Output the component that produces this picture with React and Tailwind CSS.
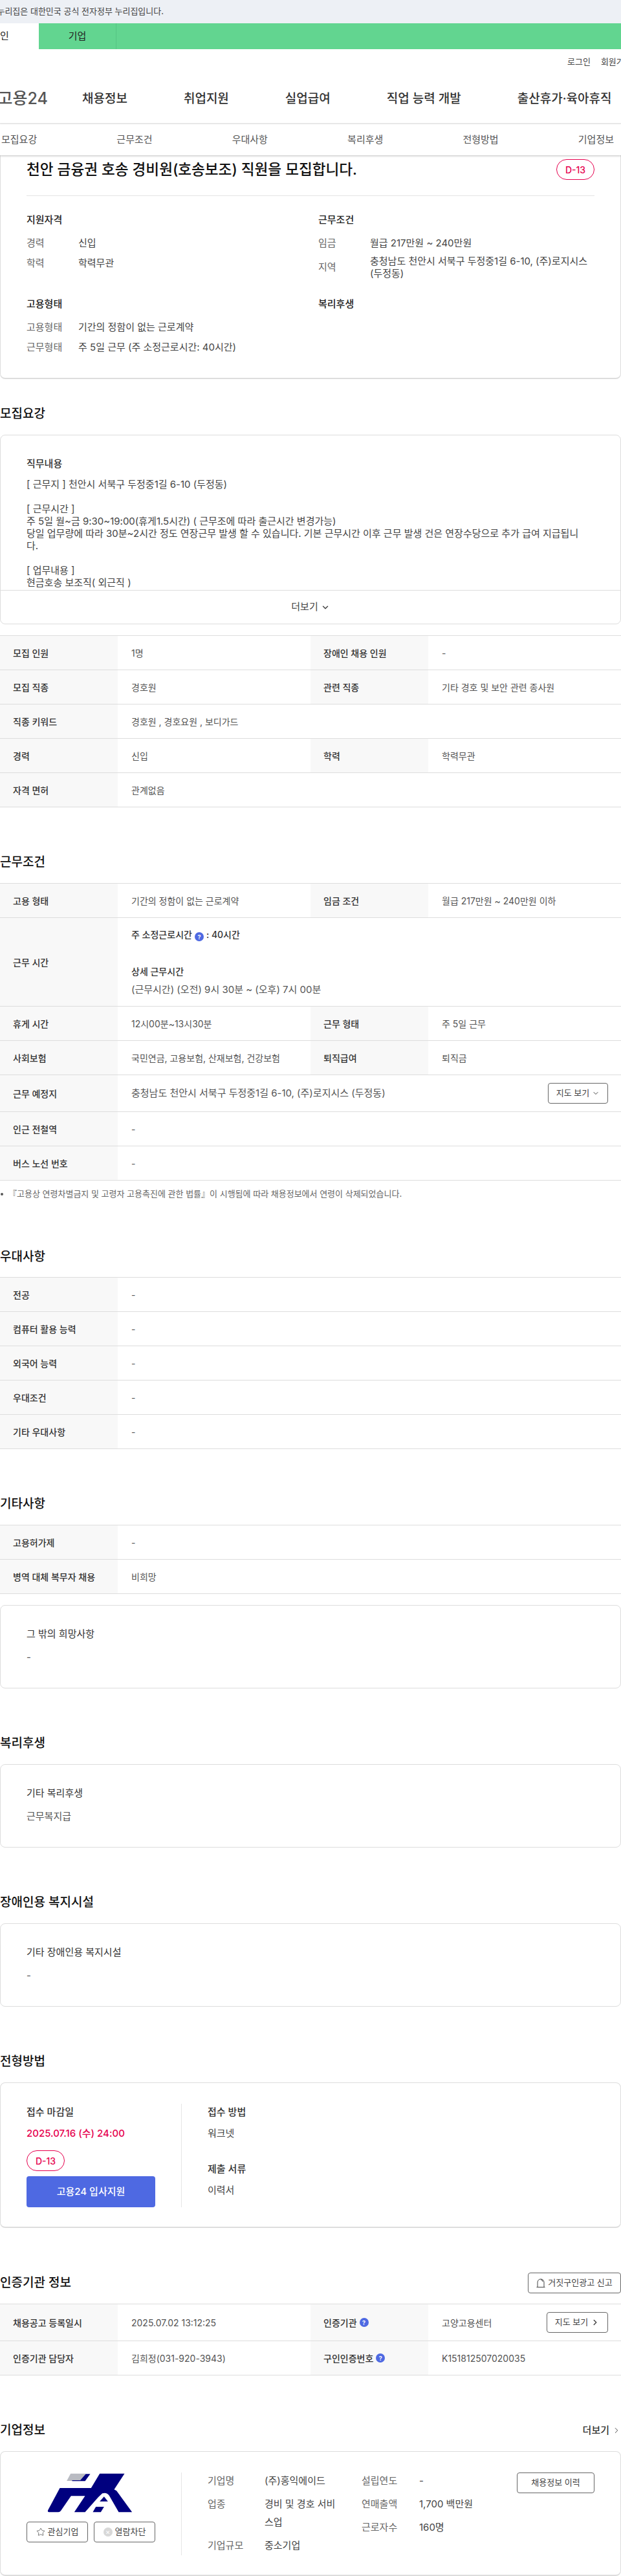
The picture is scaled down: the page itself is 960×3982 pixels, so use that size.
import React from "react";
import { ChevronDown, ChevronRight, Star } from "lucide-react";

const SectionTitle = ({ children, right }) => {
  return (
    <div className="mt-[71px] mb-[18px] flex h-7 items-center justify-between">
      <h2 className="text-[19px] leading-7 font-medium text-[#111]">{children}</h2>
      {right}
    </div>
  );
};

const Help = () => (
  <span className="mx-[4px] inline-flex h-[14px] w-[14px] items-center justify-center rounded-full bg-[#4e69e2] align-[-2px] text-[9px] leading-none font-bold text-white">
    ?
  </span>
);

// row of a table: th/td pairs, rows are 53px by default
const Row = ({ cells, h = "h-[53px]" }) => {
  return (
    <div className={`flex border-b border-[#dddddd] ${h}`}>
      {cells.map((c, i) => (
        <React.Fragment key={i}>
          <div className="flex w-[182px] shrink-0 items-center bg-[#f8f8f8] pl-5 text-[14px] font-medium text-[#333]">
            {c.th}
          </div>
          <div
            className={`flex items-center pl-[21px] text-[14px] text-[#555] ${
              cells.length === 1 ? "flex-1" : "w-[298px]"
            }`}
          >
            {c.td}
          </div>
        </React.Fragment>
      ))}
    </div>
  );
};

const Table = ({ children }) => <div className="border-t border-[#dddddd]">{children}</div>;

const Box = ({ title, children, h = "h-[129px]" }) => {
  return (
    <div className={`rounded-lg border border-[#dddddd] pt-8 pl-10 ${h}`}>
      <h3 className="h-6 text-[15px] leading-6 text-[#333]">{title}</h3>
      <p className="mt-3 h-6 text-[15px] leading-6 text-[#555]">{children}</p>
    </div>
  );
};

const Badge = () => (
  <span className="flex h-8 w-[59px] items-center justify-center rounded-full border border-[#e6004e] text-[14px] font-medium text-[#e6004e]">
    D-13
  </span>
);

const Info = ({ label, children, multi }) => (
  <div className={`flex text-[15px] ${multi ? "mt-px h-10 items-center" : "h-[31px] items-center"}`}>
    <span className="w-20 shrink-0 text-[#666]">{label}</span>
    <span className={`text-[#444] ${multi ? "leading-[19px]" : ""}`}>{children}</span>
  </div>
);

const Company = ({ label, value, vw = "w-[115px]", lw = "w-[88px]" }) => (
  <div className="flex text-[15px] leading-7">
    <span className={`${lw} shrink-0 text-[#666]`}>{label}</span>
    <span className={`${vw} text-[#444]`}>{value}</span>
  </div>
);

const Logo = () => (
  <svg width="132" height="61" viewBox="97 66 395 183">
    <path d="M205 68H275L250 102H187Z" fill="#b9bbc2" />
    <path d="M275 70H296L272 103H212V99H250Z" fill="#00007f" />
    <path
      d="M340 68H455L407 142L418 148L490 247H428L384 170Q372 153 352 160L333 178L272 247H222L272 172H207L160 240Q155 247 148 247H105Q97 247 100 238L155 135H300Z"
      fill="#00007f"
    />
    <path d="M360 175L378 197H340Z" fill="#00007f" />
    <path d="M322 222H360L345 247H308Z" fill="#00007f" />
  </svg>
);

export default function App() {
  return (
    <div className="w-[960px] overflow-hidden bg-white font-['Inter','Noto_Sans_CJK_KR',sans-serif] text-[#333]">
      {/* gov banner */}
      <div className="flex h-9 items-center bg-[#edf0f5]">
        <div className="flex w-[253px] justify-end overflow-hidden text-[13px] whitespace-nowrap text-[#444]">
          이 누리집은 대한민국 공식 전자정부 누리집입니다.
        </div>
      </div>

      <div className="flex h-10 bg-[#62d590] text-[15px]">
        <div className="flex w-[60px] items-center overflow-hidden bg-white text-[#222]">
          <span className="whitespace-nowrap">인</span>
        </div>
        <div className="flex w-[120px] items-center justify-center border-r border-[#56c484] text-[#222]">기업</div>
      </div>

      {/* header */}
      <div className="flex h-10 items-center gap-4 pl-[877px] text-[13px] whitespace-nowrap text-[#444]">
        <span>로그인</span>
        <span>회원가입</span>
      </div>
      <div className="flex h-[76px] items-center border-b-2 border-[#eeeeee] whitespace-nowrap">
        <div className="mr-[53px] flex w-[74px] justify-end overflow-hidden text-[25px] font-medium text-[#555]">
          고용24
        </div>
        <nav className="flex gap-[87px] text-[19px] font-medium text-[#333]">
          <span>채용정보</span>
          <span>취업지원</span>
          <span>실업급여</span>
          <span>직업 능력 개발</span>
          <span>출산휴가·육아휴직</span>
        </nav>
      </div>
      <div className="relative z-10 flex h-12 items-center justify-between bg-white pr-[11px] pl-[2px] text-[15px] text-[#555] shadow-[0_1px_3px_rgba(0,0,0,0.25)]">
        <span>모집요강</span>
        <span>근무조건</span>
        <span>우대사항</span>
        <span>복리후생</span>
        <span>전형방법</span>
        <span>기업정보</span>
      </div>

      {/* summary card */}
      <div className="h-[346px] rounded-b-lg border-x border-b-2 border-[#dddddd] px-10 pt-[6px]">
        <div className="flex h-8 items-center justify-between">
          <h1 className="text-[22.6px] font-medium text-[#111]">천안 금융권 호송 경비원(호송보조) 직원을 모집합니다.</h1>
          <Badge />
        </div>
        <div className="mt-6 border-t border-[#e5e5e5]" />
        <div className="mt-[25px] grid grid-cols-[451px_1fr]">
          <div className="h-[130px]">
            <h3 className="mb-[9px] h-6 text-[15px] leading-6 font-medium text-[#222]">지원자격</h3>
            <Info label="경력">신입</Info>
            <Info label="학력">학력무관</Info>
          </div>
          <div className="h-[130px]">
            <h3 className="mb-[9px] h-6 text-[15px] leading-6 font-medium text-[#222]">근무조건</h3>
            <Info label="임금">월급 217만원 ~ 240만원</Info>
            <Info label="지역" multi>
              충청남도 천안시 서북구 두정중1길 6-10, (주)로지시스
              <br />
              (두정동)
            </Info>
          </div>
          <div>
            <h3 className="mb-[9px] h-6 text-[15px] leading-6 font-medium text-[#222]">고용형태</h3>
            <Info label="고용형태">기간의 정함이 없는 근로계약</Info>
            <Info label="근무형태">주 5일 근무 (주 소정근로시간: 40시간)</Info>
          </div>
          <div>
            <h3 className="mb-[9px] h-6 text-[15px] leading-6 font-medium text-[#222]">복리후생</h3>
          </div>
        </div>
      </div>

      {/* 모집요강 */}
      <div className="mt-10 mb-[18px] flex h-7 items-center">
        <h2 className="text-[19px] leading-7 font-medium text-[#111]">모집요강</h2>
      </div>
      <div className="h-[293px] rounded-lg border border-[#dddddd]">
        <div className="h-[239px] overflow-hidden pt-8 pr-12 pl-10">
          <h3 className="h-6 text-[15px] leading-6 font-medium text-[#333]">직무내용</h3>
          <div className="mt-[10px] text-[15px] leading-[19px] text-[#444]">
            [ 근무지 ] 천안시 서북구 두정중1길 6-10 (두정동)
            <br />
            <br />
            [ 근무시간 ]
            <br />주 5일 월~금 9:30~19:00(휴게1.5시간) ( 근무조에 따라 출근시간 변경가능)
            <br />
            당일 업무량에 따라 30분~2시간 정도 연장근무 발생 할 수 있습니다. 기본 근무시간 이후 근무 발생 건은 연장수당으로 추가 급여 지급됩니다.
            <br />
            <br />
            [ 업무내용 ]
            <br />
            현금호송 보조직( 외근직 )
          </div>
        </div>
        <div className="flex h-[52px] items-center justify-center gap-1 border-t border-[#dddddd] text-[15px] text-[#444]">
          더보기 <ChevronDown size={14} strokeWidth={2.5} />
        </div>
      </div>

      <div className="mt-[17px]">
        <Table>
          <Row cells={[{ th: "모집 인원", td: "1명" }, { th: "장애인 채용 인원", td: "-" }]} />
          <Row cells={[{ th: "모집 직종", td: "경호원" }, { th: "관련 직종", td: "기타 경호 및 보안 관련 종사원" }]} />
          <Row cells={[{ th: "직종 키워드", td: "경호원 , 경호요원 , 보디가드" }]} />
          <Row cells={[{ th: "경력", td: "신입" }, { th: "학력", td: "학력무관" }]} />
          <Row cells={[{ th: "자격 면허", td: "관계없음" }]} />
        </Table>
      </div>

      {/* 근무조건 */}
      <SectionTitle>근무조건</SectionTitle>
      <Table>
        <Row cells={[{ th: "고용 형태", td: "기간의 정함이 없는 근로계약" }, { th: "임금 조건", td: "월급 217만원 ~ 240만원 이하" }]} />
        <Row
          h="h-[137px]"
          cells={[
            {
              th: "근무 시간",
              td: (
                <div className="leading-7">
                  <div className="text-[14px] font-medium text-[#333]">
                    주 소정근로시간
                    <Help />: 40시간
                  </div>
                  <div className="h-[29px]" />
                  <div className="text-[14px] font-medium text-[#333]">상세 근무시간</div>
                  <div className="text-[15px]">(근무시간) (오전) 9시 30분 ~ (오후) 7시 00분</div>
                </div>
              ),
            },
          ]}
        />
        <Row cells={[{ th: "휴게 시간", td: "12시00분~13시30분" }, { th: "근무 형태", td: "주 5일 근무" }]} />
        <Row cells={[{ th: "사회보험", td: "국민연금, 고용보험, 산재보험, 건강보험" }, { th: "퇴직급여", td: "퇴직금" }]} />
        <Row
          h="h-[57px]"
          cells={[
            {
              th: "근무 예정지",
              td: (
                <div className="flex w-full items-center justify-between pr-5">
                  <span className="text-[15px]">충청남도 천안시 서북구 두정중1길 6-10, (주)로지시스 (두정동)</span>
                  <button className="flex h-8 w-[93px] items-center justify-center gap-1 rounded border border-[#666] text-[13px] text-[#444]">
                    지도 보기 <ChevronDown size={12} />
                  </button>
                </div>
              ),
            },
          ]}
        />
        <Row cells={[{ th: "인근 전철역", td: "-" }]} />
        <Row cells={[{ th: "버스 노선 번호", td: "-" }]} />
      </Table>
      <div className="mt-[11px] flex h-5 items-center text-[13px] text-[#666]">
        <span className="mr-[8px] ml-[1px] h-[4px] w-[4px] rounded-full bg-[#555]" />
        『고용상 연령차별금지 및 고령자 고용촉진에 관한 법률』이 시행됨에 따라 채용정보에서 연령이 삭제되었습니다.
      </div>

      {/* 우대사항 */}
      <div className="mt-[73px] mb-[17px] flex h-7 items-center">
        <h2 className="text-[19px] leading-7 font-medium text-[#111]">우대사항</h2>
      </div>
      <Table>
        <Row cells={[{ th: "전공", td: "-" }]} />
        <Row cells={[{ th: "컴퓨터 활용 능력", td: "-" }]} />
        <Row cells={[{ th: "외국어 능력", td: "-" }]} />
        <Row cells={[{ th: "우대조건", td: "-" }]} />
        <Row cells={[{ th: "기타 우대사항", td: "-" }]} />
      </Table>

      {/* 기타사항 */}
      <SectionTitle>기타사항</SectionTitle>
      <Table>
        <Row cells={[{ th: "고용허가제", td: "-" }]} />
        <Row cells={[{ th: "병역 대체 복무자 채용", td: "비희망" }]} />
      </Table>
      <div className="mt-[17px]">
        <Box title="그 밖의 희망사항">-</Box>
      </div>

      <SectionTitle>복리후생</SectionTitle>
      <Box title="기타 복리후생">근무복지급</Box>

      <SectionTitle>장애인용 복지시설</SectionTitle>
      <Box title="기타 장애인용 복지시설">-</Box>

      {/* 전형방법 */}
      <SectionTitle>전형방법</SectionTitle>
      <div className="flex h-[225px] rounded-lg border-x border-t border-b-2 border-[#dddddd] pt-8 pl-10">
        <div className="h-40 w-[199px]">
          <h3 className="h-[26px] text-[15px] leading-[26px] font-medium text-[#333]">접수 마감일</h3>
          <p className="mt-[10px] h-5 text-[15px] leading-5 font-medium text-[#e6004e]">2025.07.16 (수) 24:00</p>
          <div className="mt-4">
            <Badge />
          </div>
          <button className="mt-2 h-12 w-[199px] rounded-sm bg-[#4e69e2] text-[15px] font-medium text-white">
            고용24 입사지원
          </button>
        </div>
        <div className="ml-10 h-40 border-l border-[#e5e5e5] pl-10 text-[15px]">
          <h3 className="h-[26px] leading-[26px] font-medium text-[#333]">접수 방법</h3>
          <p className="mt-[10px] h-5 leading-5 text-[#444]">워크넷</p>
          <h3 className="mt-[32px] h-[26px] leading-[26px] font-medium text-[#333]">제출 서류</h3>
          <p className="mt-[10px] h-5 leading-5 text-[#444]">이력서</p>
        </div>
      </div>

      {/* 인증기관 정보 */}
      <SectionTitle
        right={
          <button className="flex h-8 w-[144px] items-center justify-center gap-1 rounded border border-[#666] text-[13px] text-[#444]">
            <svg width="14" height="16" viewBox="0 0 14 16" fill="none" stroke="#444" strokeWidth="1">
              <path d="M2 14V7a5 5 0 0 1 10 0v7" />
              <path d="M0.5 14.5H13.5" />
              <path d="M7 3a3 3 0 0 1 3 3" />
            </svg>
            거짓구인광고 신고
          </button>
        }
      >
        인증기관 정보
      </SectionTitle>
      <Table>
        <Row
          h="h-[57px]"
          cells={[
            { th: "채용공고 등록일시", td: "2025.07.02 13:12:25" },
            {
              th: (
                <>
                  인증기관
                  <Help />
                </>
              ),
              td: (
                <div className="flex w-full items-center justify-between pr-5">
                  고양고용센터
                  <button className="flex h-8 w-[95px] items-center justify-center gap-1 rounded border border-[#666] text-[13px] text-[#444]">
                    지도 보기 <ChevronRight size={14} strokeWidth={2.5} />
                  </button>
                </div>
              ),
            },
          ]}
        />
        <Row
          cells={[
            { th: "인증기관 담당자", td: "김희정(031-920-3943)" },
            {
              th: (
                <>
                  구인인증번호
                  <Help />
                </>
              ),
              td: "K151812507020035",
            },
          ]}
        />
      </Table>

      {/* 기업정보 */}
      <SectionTitle
        right={
          <span className="flex items-center gap-1 text-[15px] font-medium text-[#333]">
            더보기 <ChevronRight size={14} strokeWidth={1.5} />
          </span>
        }
      >
        기업정보
      </SectionTitle>
      <div className="flex h-[193px] rounded-lg border-x border-t border-b-2 border-[#dddddd] pt-8 pl-10">
        <div className="w-[199px] shrink-0">
          <div className="flex justify-center pt-px pr-[3px]">
            <Logo />
          </div>
          <div className="mt-[14px] flex justify-between">
            <button className="flex h-8 w-[95px] items-center justify-center gap-1 rounded border border-[#666] text-[13px] text-[#444]">
              <Star size={14} strokeWidth={1.25} /> 관심기업
            </button>
            <button className="flex h-8 w-[95px] items-center justify-center gap-1 rounded border border-[#666] text-[13px] text-[#444]">
              <span className="flex h-[14px] w-[14px] items-center justify-center rounded-full bg-[#d8d8d8] text-[11px] leading-none text-white">
                ×
              </span>
              열람차단
            </button>
          </div>
        </div>
        <div className="ml-10 flex h-32 flex-1 border-l border-[#e5e5e5] pl-10">
          <div className="-mt-px flex w-[238px] flex-col gap-2">
            <Company label="기업명" value="(주)홍익에이드" />
            <Company label="업종" value="경비 및 경호 서비스업" />
            <Company label="기업규모" value="중소기업" />
          </div>
          <div className="-mt-px flex w-[240px] flex-col gap-2">
            <Company lw="w-[89px]" label="설립연도" value="-" />
            <Company lw="w-[89px]" label="연매출액" value="1,700 백만원" />
            <Company lw="w-[89px]" label="근로자수" value="160명" />
          </div>
          <button className="h-8 w-[120px] rounded border border-[#666] text-[13px] text-[#444]">채용정보 이력</button>
        </div>
      </div>
    </div>
  );
}
